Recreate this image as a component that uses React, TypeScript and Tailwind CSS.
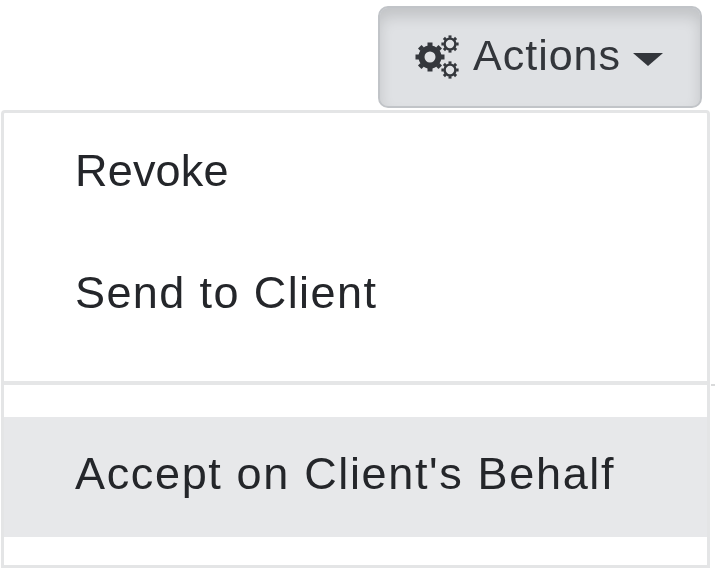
import React from "react";

const Gear: React.FC<{ cx: number; cy: number; r: number; ring: number; toothW: number; toothH: number }> = ({ cx, cy, r, ring, toothW, toothH }) => {
    return (
        <g transform={`translate(${cx} ${cy})`}>
            <circle r={r} fill="none" stroke="currentColor" strokeWidth={ring} />
            {[0, 45, 90, 135, 180, 225, 270, 315].map((deg) => (
                <rect key={deg} x={-toothW / 2} y={-r - ring / 2 - toothH + 0.5} width={toothW} height={toothH} fill="currentColor" transform={`rotate(${deg})`} />
            ))}
        </g>
    );
};

const App: React.FC = () => {
    return (
        <div className="w-[715px] h-[568px] overflow-hidden bg-white">
            <div className="relative w-[715px] h-[568px] blur-[0.5px] font-['Liberation_Sans',Arial,sans-serif]">
                <div className="flex justify-end pt-[6px] pr-[13px]">
                    <button className="flex items-center w-[324px] h-[102px] pl-[35px] rounded-[10px] bg-[#dfe1e4] border-2 border-[#c1c4c8] shadow-[inset_0_9px_14px_rgba(0,0,0,0.13)] text-[43px] text-[#33363b]">
                        <svg viewBox="0 0 46 46" className="w-[46px] h-[46px] mr-[12px] text-[#34373c]">
                            <Gear cx={15} cy={23} r={8.5} ring={6} toothW={5} toothH={3.5} />
                            <Gear cx={35} cy={10} r={5.4} ring={2.4} toothW={3} toothH={2.5} />
                            <Gear cx={35} cy={36} r={5.4} ring={2.4} toothW={3} toothH={2.5} />
                        </svg>
                        <span className="-mt-[4px] tracking-[1px]">Actions</span>
                        <span className="ml-[12px] mt-[4px] w-0 h-0 border-x-[15px] border-x-transparent border-t-[13px] border-t-[#33363b]" />
                    </button>
                </div>
                <div className="mt-[2px] ml-[1px] w-[709px] h-[458px] border-[3px] border-[#e4e5e6] rounded-t-[4px] text-[45px] text-[#24262a]">
                    <ul className="flex flex-col">
                        <li className="flex items-center h-[119px] pb-[4px] pl-[71px] tracking-[0.2px]">Revoke</li>
                        <li className="flex items-center h-[121px] pl-[71px] tracking-[1.4px]">Send to Client</li>
                    </ul>
                    <div className="mt-[28px] mb-[32px] h-[4px] bg-[#e5e6e7]" />
                    <div className="flex items-center h-[120px] pb-[7px] pl-[71px] tracking-[1.65px] bg-[#e7e8ea]">Accept on Client's Behalf</div>
                </div>
                <div className="absolute left-[711px] top-[384px] w-[4px] h-[2px] bg-[#d9dadb]" />
            </div>
        </div>
    );
};

export default App;
